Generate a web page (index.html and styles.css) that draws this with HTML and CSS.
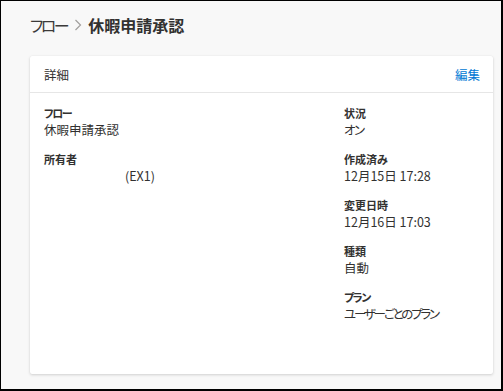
FILE: index.html
```html
<!DOCTYPE html>
<html lang="ja">
<head>
<meta charset="utf-8">
<link rel="stylesheet" href="styles.css">
</head>
<body>
<div class="frame">
  <div class="breadcrumb">
    <span class="crumb">フロー</span>
    <svg class="chev" width="8" height="12" viewBox="0 0 8 12"><path d="M1.5 1 L6.5 6 L1.5 11" fill="none" stroke="#a19f9d" stroke-width="1.2"/></svg>
    <span class="current">休暇申請承認</span>
  </div>
  <div class="card">
    <div class="card-head">
      <span class="card-title">詳細</span>
      <a class="edit">編集</a>
    </div>
    <div class="card-body">
      <div class="col">
        <div class="field"><div class="label kana-s">フロー</div><div class="value">休暇申請承認</div></div>
        <div class="field"><div class="label">所有者</div><div class="value owner">(EX1)</div></div>
      </div>
      <div class="col">
        <div class="field"><div class="label">状況</div><div class="value kana-s">オン</div></div>
        <div class="field"><div class="label">作成済み</div><div class="value">12月15日 17:28</div></div>
        <div class="field"><div class="label">変更日時</div><div class="value">12月16日 17:03</div></div>
        <div class="field"><div class="label">種類</div><div class="value">自動</div></div>
        <div class="field"><div class="label kana-s">プラン</div><div class="value kana">ユーザーごとのプラン</div></div>
      </div>
    </div>
  </div>
</div>
</body>
</html>
```

FILE: styles.css
```css
* { box-sizing: border-box; }
html, body { margin: 0; padding: 0; }
body {
  font-family: "Noto Sans CJK JP", "Noto Sans", sans-serif;
  font-feature-settings: "palt";
  color: #323130;
  background: #fff;
}
.frame {
  width: 503px;
  height: 391px;
  background: #f8f8f8;
  border-top: 1px solid #000;
  border-left: 1px solid #000;
  border-right: 2px solid #000;
  border-bottom: 2px solid #000;
  padding: 13px 8px 0 29px;
}
.breadcrumb {
  display: flex;
  align-items: center;
  height: 22px;
  font-size: 16px;
  line-height: 22px;
}
.crumb { color: #3b3a39; letter-spacing: -2.5px; }
.chev { margin: 0 6px 0 7px; }
.current { font-weight: 700; color: #323130; }
.card {
  margin-top: 20px;
  width: 463px;
  height: 318px;
  background: #fff;
  border-radius: 2px;
  box-shadow: 0 1px 3px rgba(0,0,0,0.16), 0 0 1px rgba(0,0,0,0.08);
}
.card-head {
  height: 37px;
  display: flex;
  align-items: center;
  justify-content: space-between;
  padding: 0 13px 0 14px;
  border-bottom: 1px solid #e6e6e6;
  font-size: 12.5px;
}
.card-title { color: #323130; }
.edit { color: #0078d4; cursor: pointer; }
.card-body {
  display: grid;
  grid-template-columns: 300px 1fr;
  padding: 13px 14px;
}
.field { margin-bottom: 14px; }
.label {
  font-size: 11px;
  font-weight: 600;
  line-height: 15px;
  color: #323130;
}
.value {
  font-size: 12.5px;
  line-height: 17px;
  color: #323130;
}
.kana { letter-spacing: -2.2px; }
.kana-s { letter-spacing: -1.5px; }
.owner { padding-left: 81px; }
```
